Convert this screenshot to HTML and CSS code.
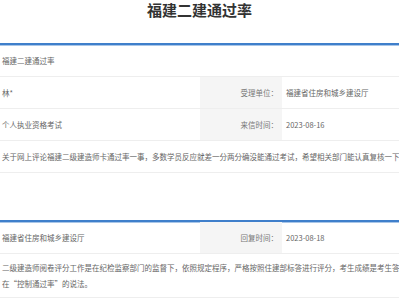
FILE: index.html
```html
<!DOCTYPE html>
<html lang="zh-CN">
<head>
<meta charset="utf-8">
<title>福建二建通过率</title>
<link rel="stylesheet" href="styles.css">
</head>
<body>
<div class="page">
  <h1 class="title">福建二建通过率</h1>
  <div class="sheet">
    <div class="cell full">福建二建通过率</div>
    <div class="cell">林*</div>
    <div class="cell label">受理单位：</div>
    <div class="cell value">福建省住房和城乡建设厅</div>
    <div class="cell">个人执业资格考试</div>
    <div class="cell label">来信时间：</div>
    <div class="cell value">2023-08-16</div>
    <div class="cell full">关于网上评论福建二级建造师卡通过率一事，多数学员反应就差一分两分确没能通过考试，希望相关部门能认真复核一下。</div>
  </div>
  <div class="sheet reply">
    <div class="cell">福建省住房和城乡建设厅</div>
    <div class="cell label">回复时间：</div>
    <div class="cell value">2023-08-18</div>
    <div class="cell full text">二级建造师阅卷评分工作是在纪检监察部门的监督下，依照规定程序，严格按照住建部标答进行评分，考生成绩是考生答题的真实反映，不存在“控制通过率”的说法。</div>
  </div>
</div>
</body>
</html>
```
FILE: styles.css
```css
html, body {
  margin: 0;
  padding: 0;
  overflow: hidden;
  background: #fff;
}
body {
  font-family: "Noto Sans CJK SC", "Noto Sans", sans-serif;
  color: #666;
}
.page {
  width: 399px;
}
.title {
  margin: 0 0 23px;
  width: 399px;
  text-align: center;
  font-size: 15px;
  line-height: 20px;
  font-weight: bold;
  color: #333;
}
.sheet {
  display: grid;
  grid-template-columns: 200px 82px 190px;
  width: 472px;
  border-top: 2px solid #3f7fcb;
  box-shadow: inset 0 1px 0 #a9c6e8;
  font-size: 7.5px;
}
.reply {
  margin-top: 47px;
}
.cell {
  height: 31px;
  display: flex;
  align-items: center;
  padding: 0 4px 0 2px;
  border-bottom: 1px solid #eeeeee;
  white-space: nowrap;
  overflow: hidden;
}
.full {
  grid-column: 1 / -1;
}
.label {
  justify-content: flex-end;
  background: #f5f5f5;
  color: #777;
  padding: 0 4px 0 0;
}
.value {
  padding-left: 4px;
}
.text {
  height: auto;
  display: block;
  white-space: normal;
  line-height: 16px;
  padding: 6px 4px 5px 2px;
}
```
